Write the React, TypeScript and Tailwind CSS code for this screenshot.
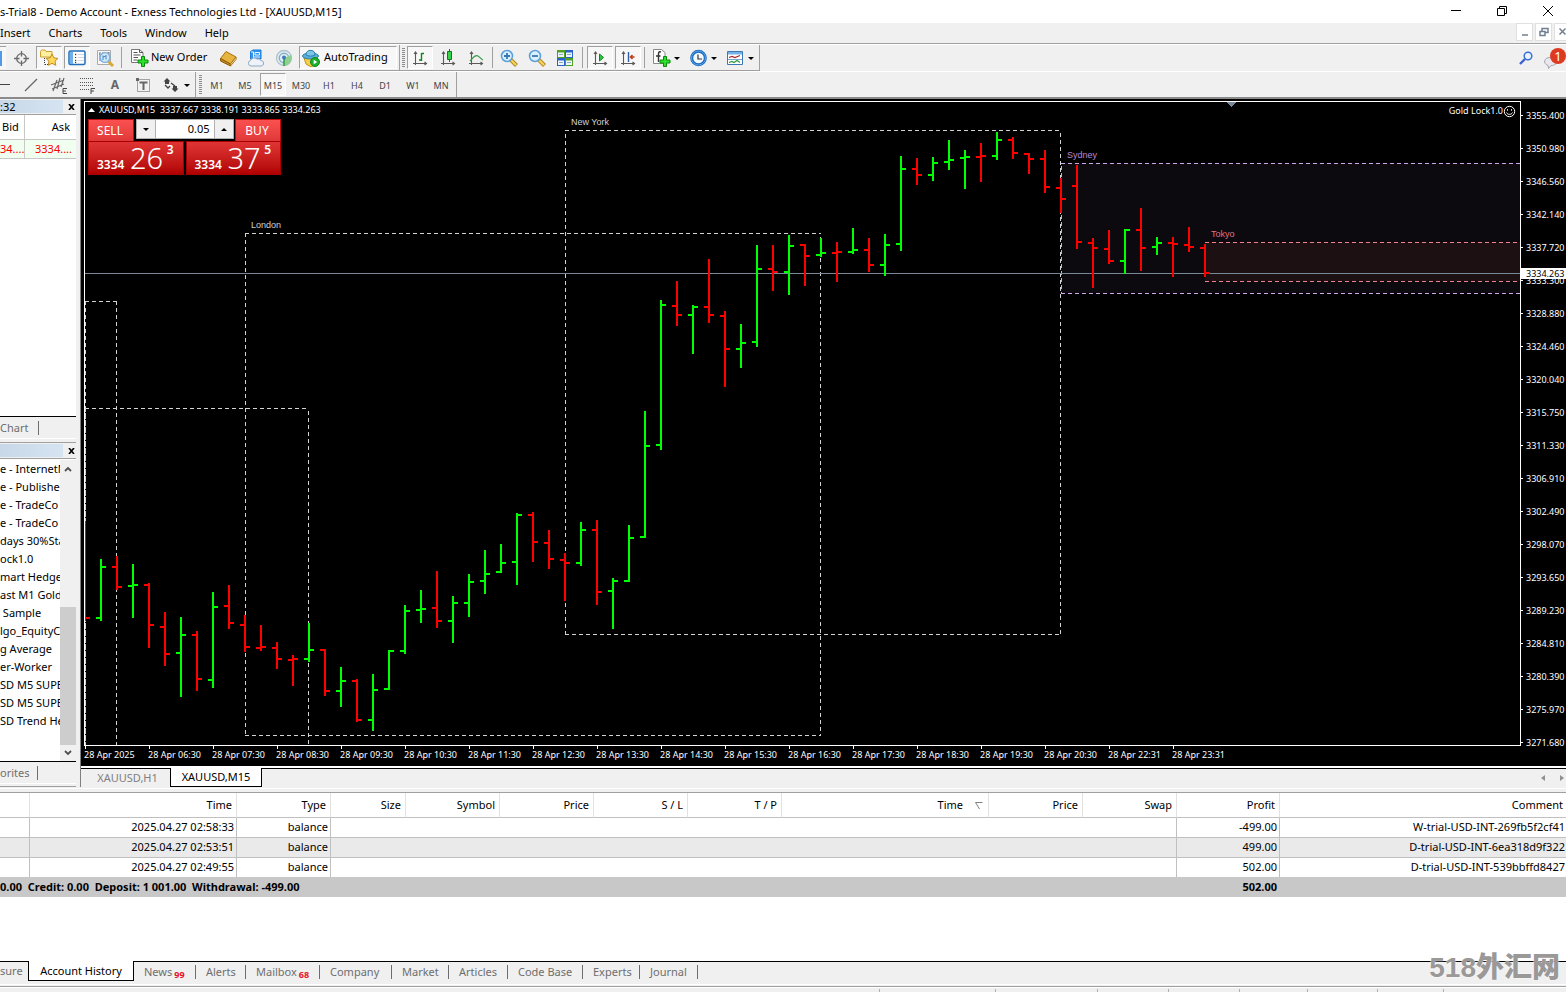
import React, { useState } from 'react';

type Bar = [high: number, low: number, open: number, close: number, up: 0 | 1];

const BARS: Bar[] = [
  [521, 621, 618, 618, 0], [559, 621, 618, 567, 1], [556, 590, 567, 587, 0], [564, 618, 586, 585, 1],
  [583, 648, 585, 625, 0], [612, 666, 627, 654, 0], [617, 697, 653, 635, 1], [631, 691, 635, 679, 0],
  [592, 688, 680, 607, 1], [585, 629, 606, 623, 0], [615, 652, 625, 647, 0], [625, 651, 648, 647, 0],
  [642, 669, 648, 659, 0], [655, 686, 660, 659, 0], [623, 662, 659, 650, 1], [649, 696, 650, 691, 0],
  [667, 707, 691, 681, 1], [679, 722, 681, 720, 0], [674, 731, 720, 690, 1], [650, 690, 689, 651, 1],
  [605, 654, 651, 611, 1], [590, 623, 610, 609, 1], [571, 628, 608, 621, 0], [596, 643, 621, 603, 1],
  [574, 617, 603, 582, 1], [550, 594, 581, 574, 1], [544, 573, 572, 563, 1], [513, 585, 562, 515, 1],
  [512, 562, 515, 542, 0], [530, 569, 543, 559, 0], [553, 601, 560, 563, 0], [522, 566, 563, 530, 1],
  [520, 605, 530, 592, 0], [578, 629, 591, 581, 1], [525, 582, 581, 538, 1], [411, 538, 537, 446, 1],
  [300, 450, 445, 305, 1], [281, 326, 306, 315, 0], [305, 354, 315, 307, 1], [259, 323, 307, 315, 0],
  [311, 387, 316, 349, 0], [324, 368, 349, 343, 1], [245, 347, 342, 269, 1], [245, 291, 269, 272, 0],
  [235, 295, 272, 246, 1], [244, 286, 245, 256, 0], [238, 257, 255, 253, 1], [242, 282, 253, 252, 0],
  [228, 254, 252, 250, 1], [238, 272, 250, 265, 0], [234, 276, 265, 245, 1], [156, 251, 244, 169, 1],
  [158, 185, 169, 175, 0], [157, 181, 175, 163, 1], [140, 170, 162, 160, 1], [150, 189, 158, 157, 1],
  [143, 182, 157, 156, 0], [132, 160, 156, 140, 1], [137, 159, 140, 153, 0], [153, 174, 154, 159, 0],
  [150, 193, 159, 187, 0], [178, 213, 188, 199, 0], [165, 249, 186, 242, 0], [238, 288, 243, 248, 0],
  [230, 264, 249, 261, 0], [229, 274, 261, 230, 1], [208, 271, 230, 248, 0], [237, 255, 247, 243, 1],
  [237, 277, 243, 244, 0], [227, 252, 245, 247, 0], [244, 277, 248, 273, 0],
];

const PRICES = [
  '3355.400', '3350.980', '3346.560', '3342.140', '3337.720', '3333.300', '3328.880', '3324.460', '3320.040', '3315.750',
  '3311.330', '3306.910', '3302.490', '3298.070', '3293.650', '3289.230', '3284.810', '3280.390', '3275.970', '3271.680',
];

const TIMES = [
  '2025', '06:30', '07:30', '08:30', '09:30', '10:30', '11:30', '12:30', '13:30',
  '14:30', '15:30', '16:30', '17:30', '18:30', '19:30', '20:30', '22:31', '23:31',
];

const NAV_ITEMS = [
  'e - InternetM', 'e - Publishe', 'e - TradeCo', 'e - TradeCo', 'days 30%Sta', 'ock1.0', 'mart Hedge',
  'ast M1 Gold', '\u00a0Sample', 'lgo_EquityC', 'g Average', 'er-Worker', 'SD M5 SUPE', 'SD M5 SUPE', 'SD Trend He',
];

const TIMEFRAMES = ['M1', 'M5', 'M15', 'M30', 'H1', 'H4', 'D1', 'W1', 'MN'];

const BOTTOM_TABS: { label: string; count?: string; width: string }[] = [
  { label: 'News', count: '99', width: 'w-[62px]' },
  { label: 'Alerts', width: 'w-[50px]' },
  { label: 'Mailbox', count: '68', width: 'w-[74px]' },
  { label: 'Company', width: 'w-[72px]' },
  { label: 'Market', width: 'w-[57px]' },
  { label: 'Articles', width: 'w-[59px]' },
  { label: 'Code Base', width: 'w-[75px]' },
  { label: 'Experts', width: 'w-[57px]' },
  { label: 'Journal', width: 'w-[58px]' },
];

const HISTORY = [
  { time: '2025.04.27 02:58:33', profit: '-499.00', comment: 'W-trial-USD-INT-269fb5f2cf41' },
  { time: '2025.04.27 02:53:51', profit: '499.00', comment: 'D-trial-USD-INT-6ea318d9f322' },
  { time: '2025.04.27 02:49:55', profit: '502.00', comment: 'D-trial-USD-INT-539bbffd8427' },
];

const Icon: React.FC<{ children: React.ReactNode }> = ({ children }) => (
  <svg viewBox="0 0 18 18" className="w-[18px] h-[18px] shrink-0" fill="none">{children}</svg>
);

const Caret = () => (
  <svg viewBox="0 0 6 3" className="w-[6px] h-[3px] shrink-0"><path d="M0 0h6L3 3z" fill="#000" /></svg>
);

const ToolButton: React.FC<{ label: string; pressed?: boolean; children: React.ReactNode }> = ({ label, pressed, children }) => (
  <button
    aria-label={label}
    className={`w-[26px] h-[23px] shrink-0 flex items-center justify-center pt-px ${
      pressed ? 'bg-[#f7f7f7] border border-t-[#a0a0a0] border-l-[#a0a0a0] border-b-white border-r-white' : ''
    }`}
  >
    {children}
  </button>
);

const MenuButton: React.FC<{ label: string; children: React.ReactNode }> = ({ label, children }) => (
  <button aria-label={label} className="w-[35px] h-[23px] shrink-0 flex items-center gap-[3px] pl-[5px] pt-px">
    {children}
    <Caret />
  </button>
);

const Separator = () => <div className="w-px h-[21px] mx-px bg-[#a0a0a0] shrink-0" />;

const Grip = () => (
  <svg viewBox="0 0 3 20" className="w-[3px] h-5 shrink-0" shapeRendering="crispEdges">
    <path d="M1.5 0v20" stroke="#8c8c8c" strokeWidth="3" strokeDasharray="1 1" />
  </svg>
);

const Axes = () => (
  <path d="M4.5 3v13M2 14.5h13M3 5l1.500-2L6 5M13.500 13l2 1.500-2 1.500" stroke="#5a5a5a" strokeWidth="1.100" />
);

const Plus = () => (
  <path d="M10.500 7.500h3v3.500h3.500v3h-3.500v3.500h-3V14H7v-3h3.500z" fill="#2ee02e" stroke="#078a07" />
);

const ZoomIcon: React.FC<{ plus?: boolean }> = ({ plus }) => (
  <Icon>
    <path d="M11 11l5.500 5.500" stroke="#b08a20" strokeWidth="4" />
    <path d="M11 11l5 5" stroke="#f7d860" strokeWidth="2" />
    <circle cx="7" cy="7" r="5.500" fill="#d8f0ff" stroke="#5a9fd8" strokeWidth="1.500" />
    <path d={plus ? 'M4 7h6M7 4v6' : 'M4 7h6'} stroke="#3a78b0" strokeWidth="1.800" />
  </Icon>
);

const MainToolbar = () => (
  <div className="flex items-center h-[27px] border-b border-white bg-[#f0f0f0] text-[11px]">
    <div className="flex items-center gap-[2px] h-[26px] pr-[2px] border-b border-r border-[#a0a0a0]">
      <button aria-label="Market Watch" className="w-[6px] h-[23px] bg-[#f7f7f7] border-t border-[#a0a0a0] flex items-center shrink-0">
        <span className="w-[2px] h-[15px] bg-[#4f9be8]" />
      </button>
      <ToolButton label="Data Window">
        <Icon>
          <circle cx="9.500" cy="9.500" r="4.800" stroke="#6a6a6a" strokeWidth="1.300" />
          <path d="M9.500 2v5.500M9.500 11.500V17M2 9.500h5.500M11.500 9.500H17" stroke="#6a6a6a" strokeWidth="1.300" />
        </Icon>
      </ToolButton>
      <ToolButton label="Navigator" pressed>
        <Icon>
          <path d="M.5 2.500l1-1.500h3.500l1 1.500h6V8H.500z" fill="#fff0a0" stroke="#cfa030" />
          <path d="M4.500 9v6.500M5 15.500h3" stroke="#333" strokeDasharray="1 1" />
          <path d="M12 5l1.900 3.900 4 .5-2.900 2.800.8 4.100L12 14.300l-3.800 2 .8-4.100-2.900-2.800 4-.5z" fill="#ffd95a" stroke="#c08a20" />
        </Icon>
      </ToolButton>
      <ToolButton label="Terminal" pressed>
        <Icon>
          <rect x="1" y="2" width="16" height="13.500" rx="1.500" fill="#fff" stroke="#2170b8" strokeWidth="1.500" />
          <path d="M2 3h3v12H2z" fill="#6fb0ea" />
          <path d="M7 5.500h1.200M7 11.500h1.200" stroke="#d00" strokeWidth="1.500" />
          <path d="M7 8.500h1.200M7 13.500h1.200" stroke="#333" />
          <path d="M9.500 5.500H16M9.500 8.500H16M9.500 11.500H16" stroke="#d0d8e4" />
        </Icon>
      </ToolButton>
      <ToolButton label="Strategy Tester">
        <Icon>
          <path d="M1.500 1.500h13v14h-13z" fill="#f8f8f8" stroke="#aaa" />
          <path d="M4 3v9M7 3v4M12 3v5M3 5h1M12 4h2" stroke="#777" />
          <path d="M12.500 12.500l4.500 4.500" stroke="#d8a830" strokeWidth="3" />
          <circle cx="9" cy="8.500" r="4.900" fill="#cfe8fb" stroke="#7aaede" strokeWidth="1.400" />
          <path d="M7 11V6.500M10 6v4.500M7 8l3-1" stroke="#4c86bb" />
        </Icon>
      </ToolButton>
      <Separator />
      <button className="w-[88px] h-[23px] flex items-center gap-[2px] pl-[6px] whitespace-nowrap">
        <Icon>
          <path d="M.5.500h8l3.500 3v10H.500z" fill="#fff" stroke="#777" />
          <path d="M8.500.500v3H12M2.500 3.500h4M2.500 6h7M2.500 8.500h4.500M2.500 11h4" stroke="#555" />
          <Plus />
        </Icon>
        New Order
      </button>
      <ToolButton label="MetaEditor">
        <Icon>
          <path d="M1.500 9.500L7 2.500l10 5.500-5.500 7z" fill="#e8b440" stroke="#a8720c" />
          <path d="M1.500 9.500v2.500L11.500 17v-2z" fill="#c78b1c" stroke="#8a5c0a" />
          <path d="M11.500 15v2l5.500-6.500V8z" fill="#fff1c4" stroke="#a8720c" />
        </Icon>
      </ToolButton>
      <ToolButton label="VPS">
        <Icon>
          <path d="M3.500 2.500L6 1h8v9H3.500z" fill="#2f95f0" stroke="#1c7fd8" />
          <path d="M4 3h2.500v6M8 3.500h4.500v2.500H8zM6.500 8H13" stroke="#e8f5ff" />
          <path d="M4 17a2.800 2.800 0 01-.5-5.500 4 4 0 016.500-1.500 3.500 3.500 0 014 1.500A2.800 2.800 0 0114.500 17z" fill="#eef3fa" stroke="#8fa6c4" />
        </Icon>
      </ToolButton>
      <ToolButton label="Signals">
        <Icon>
          <circle cx="9" cy="9" r="7.500" fill="#e6eef0" stroke="#b0c4cc" strokeWidth="1.300" />
          <circle cx="9" cy="9" r="4.700" stroke="#7fb0cd" strokeWidth="1.400" />
          <path d="M9 9l7-3a8 8 0 01-7 11z" fill="#8fcf8f" />
          <path d="M9 9v8" stroke="#2f9e3f" strokeWidth="1.500" />
          <circle cx="9" cy="8.500" r="2" fill="#3f77c8" />
        </Icon>
      </ToolButton>
      <button className="w-[98px] h-[23px] flex items-center gap-1 pl-[2px] whitespace-nowrap bg-[#f7f7f7] border border-t-[#a0a0a0] border-l-[#a0a0a0] border-b-white border-r-white">
        <Icon>
          <path d="M2 9h13l-1 6-5 3-5-3z" fill="#f5cf4c" stroke="#c0920f" />
          <ellipse cx="8.500" cy="7" rx="8" ry="3" fill="#5ab0dc" stroke="#2a7dab" />
          <path d="M4 6c0-3 2-5 5-4.500 3 0 4 2 4 4.500-2 1.500-7 1.500-9 0z" fill="#7cc6ea" stroke="#2a7dab" />
          <circle cx="13" cy="13" r="4.500" fill="#1faf2d" stroke="#0d8a1a" />
          <path d="M11.700 10.700v4.600l3.500-2.300z" fill="#fff" />
        </Icon>
        AutoTrading
      </button>
    </div>
    <div className="flex items-center gap-[2px] h-[26px] pl-[2px] pr-[2px] border-b border-r border-[#a0a0a0]">
      <Grip />
      <ToolButton label="Bar Chart" pressed>
        <Icon><Axes /><path d="M10.500 4v8M10.500 4.500H13M8 11h2.500" stroke="#0a8a1a" strokeWidth="1.400" /></Icon>
      </ToolButton>
      <ToolButton label="Candlesticks">
        <Icon><Axes /><path d="M10.500 0v13" stroke="#0a7a1a" /><path d="M8.500 2.500h4v8h-4z" fill="#35d24a" stroke="#0a7a1a" /></Icon>
      </ToolButton>
      <ToolButton label="Line Chart">
        <Icon><Axes /><path d="M3 12C6 9 8 5 11 7s3 3 5 4" stroke="#3a9a48" strokeWidth="1.300" /></Icon>
      </ToolButton>
      <Separator />
      <ToolButton label="Zoom In"><ZoomIcon plus /></ToolButton>
      <ToolButton label="Zoom Out"><ZoomIcon /></ToolButton>
      <ToolButton label="Tile Windows">
        <Icon>
          <path d="M1 1h8v8H1zM9 9h8v8H9z" fill="#4da321" />
          <path d="M9 1h8v8H9zM1 9h8v8H1z" fill="#2a62c9" />
          <path d="M2 3.500h6V8H2zM10 3.500h6V8h-6zM2 11.500h6V16H2zM10 11.500h6V16h-6z" fill="#eef5ff" />
          <path d="M3 5.500h4M11 5.500h4M3 13.500h4M11 13.500h4" stroke="#8ab" />
        </Icon>
      </ToolButton>
      <div className="w-px h-[21px] mx-[2px] bg-[#a0a0a0] shrink-0" />
      <ToolButton label="Auto Scroll" pressed>
        <Icon><Axes /><path d="M8.500 5v7l4-3.500z" fill="#2fc844" stroke="#0a8a1a" /></Icon>
      </ToolButton>
      <ToolButton label="Chart Shift" pressed>
        <Icon><Axes /><path d="M9.500 3v10" stroke="#2b5fa8" strokeWidth="1.400" /><path d="M15.500 8h-4M13.500 6l-2 2 2 2" stroke="#c03a10" strokeWidth="1.500" /></Icon>
      </ToolButton>
      <Separator />
      <MenuButton label="Indicators">
        <Icon>
          <path d="M.5.500h8l3.500 3v11H.500z" fill="#fff" stroke="#888" />
          <path d="M8 3C5.500 2 5.500 4 5.500 6v7M3 7h4.500" stroke="#333" strokeWidth="1.400" />
          <Plus />
        </Icon>
      </MenuButton>
      <MenuButton label="Periods">
        <Icon>
          <circle cx="8.500" cy="9" r="6.800" fill="#f2f8ff" stroke="#1c68bd" strokeWidth="3" />
          <circle cx="8.500" cy="9" r="7" stroke="#58a7ec" />
          <path d="M8 5.500V10h4" stroke="#333" strokeWidth="1.200" />
        </Icon>
      </MenuButton>
      <MenuButton label="Templates">
        <Icon>
          <path d="M.5 2.500h15v13H.500z" fill="#fff" stroke="#3d78b5" />
          <path d="M1 3h14v2.500H1z" fill="#74b2ea" />
          <path d="M1 10.500h14" stroke="#7aa7d4" />
          <path d="M2 8.500l3-1 3 1 5-2" stroke="#a02a2a" strokeWidth="1.200" />
          <path d="M2 13.500l3-1 2 1 3-2 3 2" stroke="#2a9a3a" strokeWidth="1.200" />
        </Icon>
      </MenuButton>
    </div>
    <div className="flex-1" />
    <button aria-label="Search" className="w-5 h-[23px] flex items-center justify-center">
      <svg viewBox="0 0 14 14" className="w-[14px] h-[14px]" fill="none">
        <circle cx="9" cy="5" r="3.800" fill="#eaf3ff" stroke="#3a6fd8" strokeWidth="1.500" />
        <path d="M6 8l-5 5" stroke="#3a62d0" strokeWidth="2.400" />
      </svg>
    </button>
    <button aria-label="Notifications" className="relative w-[26px] ml-1 h-[23px]">
      <svg viewBox="0 0 26 23" className="w-[26px] h-[23px]" fill="none">
        <path d="M10 10.500c-6 0-7.500 6-2 8l.5 3 2.500-3c4 0 6-2 6-4z" fill="#e8e8ee" stroke="#a4a4b0" />
        <circle cx="18" cy="9" r="8" fill="#dd3a22" />
      </svg>
      <span className="absolute left-[10px] top-px w-4 text-center leading-4 text-[13px] text-white">1</span>
    </button>
  </div>
);

const DrawingToolbar = () => {
  const [frame, setFrame] = useState('M15');
  return (
    <div className="flex items-center h-[27px] border-b-2 border-[#8a8a8a] bg-[#f0f0f0] text-[9px] text-[#444]">
      <div className="flex items-center gap-[2px] h-full pr-[2px] border-r border-[#a0a0a0]">
        <button aria-label="Horizontal Line" className="w-4 h-[23px] flex items-center"><span className="w-[10px] h-px bg-[#444]" /></button>
        <ToolButton label="Trendline"><Icon><path d="M3 15L15 3" stroke="#666" strokeWidth="1.300" /></Icon></ToolButton>
        <ToolButton label="Equidistant Channel">
          <Icon>
            <path d="M1 9L14 4M2 13l12-5M3 15l4-11M7 13l3-11M11 11l3-9" stroke="#666" strokeWidth="1.200" />
            <path d="M17 12.500h-4v5h4M13 15h3" stroke="#444" />
          </Icon>
        </ToolButton>
        <ToolButton label="Fibonacci Retracement">
          <Icon>
            <path d="M2 2.500h14M2 6.500h14M2 9.500h14M2 13.500h9" stroke="#555" strokeDasharray="1 1" />
            <path d="M13 18v-5.500h4M13 15h3" stroke="#444" />
          </Icon>
        </ToolButton>
        <ToolButton label="Text"><span className="text-[12px] font-bold text-[#666]">A</span></ToolButton>
        <ToolButton label="Text Label">
          <Icon>
            <path d="M3.500 3.500h12v12h-12z" stroke="#555" strokeDasharray="1 1" />
            <path d="M2 2h3v3H2z" fill="#666" />
            <path d="M5.500 6.500h8M9.500 6v8" stroke="#666" strokeWidth="2" />
          </Icon>
        </ToolButton>
        <MenuButton label="Arrows">
          <Icon>
            <path d="M4 2l3.500 3.500H6V8H2V5.500H.500zM10 10h4v2.500h1.500L12 16l-3.500-3.500H10z" fill="#444" />
            <path d="M2 9l3 3 2-2M8 7l4 3" stroke="#444" strokeWidth="1.300" />
          </Icon>
        </MenuButton>
      </div>
      <div className="flex items-center gap-[2px] h-full pl-[3px] pr-[2px] border-r border-[#a0a0a0]">
        <Grip />
        {TIMEFRAMES.map((tf) => (
          <button
            key={tf}
            onClick={() => setFrame(tf)}
            className={`w-[26px] h-[23px] shrink-0 text-center pt-[2px] ${
              frame === tf ? 'bg-[#f7f7f7] border border-t-[#a0a0a0] border-l-[#a0a0a0] border-b-white border-r-white' : ''
            }`}
          >
            {tf}
          </button>
        ))}
      </div>
    </div>
  );
};

const PanelTitle: React.FC<{ text?: string }> = ({ text }) => (
  <div className="flex items-center h-4 pb-px border-b border-[#a0a0a0]">
    <div className="w-[63px] shrink-0 h-[13px] leading-[13px] bg-gradient-to-r from-[#c8d8e8] to-[#d6e4f2]">{text}</div>
    <button aria-label="Close panel" className="flex-1 h-[13px] pl-[3px] pt-px flex items-center justify-center">
      <svg viewBox="0 0 7 6" className="w-[7px] h-[6px] shrink-0"><path d="M1 0l5 6M6 0L1 6" stroke="#000" strokeWidth="1.600" /></svg>
    </button>
  </div>
);

const SidePanels = () => (
  <aside className="w-[81px] shrink-0 flex flex-col border-r border-[#7f7f7f] bg-[#f0f0f0] pr-1 text-[11px]">
    <PanelTitle text=":32" />
    <div className="h-[302px] bg-white border-b border-black">
      <table className="w-full table-fixed border-separate border-spacing-0 leading-4">
        <colgroup><col className="w-[25px]" /><col /></colgroup>
        <thead>
          <tr className="h-[25px]">
            <th className="font-normal text-left pl-[2px] border-r border-b border-[#c8c8c8]">Bid</th>
            <th className="font-normal text-right pr-[6px] border-b border-[#c8c8c8]">Ask</th>
          </tr>
        </thead>
        <tbody>
          <tr className="h-[19px] bg-[#f0fff0] text-[#ff0000]">
            <td className="border-r border-b border-[#c8c8c8]">34....</td>
            <td className="text-right pr-1 border-b border-[#c8c8c8]">3334....</td>
          </tr>
        </tbody>
      </table>
    </div>
    <div className="flex items-center h-[21px] text-[#6e6e6e]">
      <button className="h-[14px] leading-[11px] w-[39px] text-left border-r border-[#6e6e6e]">Chart</button>
    </div>
    <div className="h-[5px] border-t border-white border-b border-b-[#a0a0a0]" />
    <PanelTitle />
    <div className="flex flex-1 min-h-0 bg-white border-b border-black pt-px">
      <ul className="flex-1 min-w-0 overflow-hidden whitespace-nowrap">
        {NAV_ITEMS.map((item, i) => (
          <li key={i} className="h-[18px] leading-[18px]">{item}</li>
        ))}
      </ul>
      <div className="w-4 shrink-0 flex flex-col items-center bg-[#f0f0f0]">
        <button aria-label="Scroll up" className="h-[18px] flex items-center">
          <svg viewBox="0 0 8 6" className="w-2 h-[6px]" fill="none"><path d="M1 5l3-3 3 3" stroke="#505050" strokeWidth="1.800" /></svg>
        </button>
        <div className="flex-1" />
        <div className="w-full h-[138px] bg-[#cdcdcd]" />
        <button aria-label="Scroll down" className="h-4 flex items-center">
          <svg viewBox="0 0 8 6" className="w-2 h-[6px]" fill="none"><path d="M1 1l3 3 3-3" stroke="#505050" strokeWidth="1.800" /></svg>
        </button>
      </div>
    </div>
    <div className="flex items-center h-[21px] text-[#6e6e6e]">
      <button className="h-[14px] leading-[11px] w-[38px] text-left border-r border-[#6e6e6e]">orites</button>
    </div>
    <div className="h-1 border-t border-white border-b border-b-[#a0a0a0]" />
  </aside>
);

const Quote: React.FC<{ pips: string; point: string }> = ({ pips, point }) => (
  <button className="relative flex-1 h-[34px] border border-[#a80000] bg-gradient-to-b from-[#e03434] to-[#b00000] text-white text-left">
    <span className="absolute left-2 bottom-px text-[12px] leading-4 font-semibold">3334</span>
    <span className="absolute left-[41px] top-0 text-[29px] leading-8 font-light">{pips}</span>
    <span className="absolute right-[9px] top-0 text-[12px] leading-4 font-semibold">{point}</span>
  </button>
);

const OneClickTrading = () => {
  const [lots, setLots] = useState('0.05');
  return (
    <div className="absolute left-[3px] top-[17px] w-[193px]">
      <div className="flex justify-between h-[22px] text-[12px] text-white">
        <button className="w-[46px] pr-[2px] bg-gradient-to-b from-[#fb5050] to-[#e03838] border border-b-0 border-[#b81010]">SELL</button>
        <div className="flex w-[98px] h-5 bg-white border border-[#b0b0b0]">
          <button aria-label="Decrease volume" className="w-[19px] flex items-center justify-center bg-[#f0f0f0] border-r border-[#b0b0b0]"><Caret /></button>
          <input
            aria-label="Volume"
            value={lots}
            onChange={(e) => setLots(e.target.value)}
            className="w-0 flex-1 pr-1 text-right text-[11px] text-black outline-none"
          />
          <button aria-label="Increase volume" className="w-[19px] flex items-center justify-center bg-[#f0f0f0] border-l border-[#b0b0b0]">
            <svg viewBox="0 0 6 3" className="w-[6px] h-[3px]"><path d="M0 3h6L3 0z" fill="#000" /></svg>
          </button>
        </div>
        <button className="w-[46px] pr-[2px] bg-gradient-to-b from-[#fb5050] to-[#e03838] border border-b-0 border-[#b81010]">BUY</button>
      </div>
      <div className="flex gap-[2px]">
        <Quote pips="26" point="3" />
        <Quote pips="37" point="5" />
      </div>
    </div>
  );
};

const PriceChart = () => (
  <svg className="absolute inset-0 w-full h-full" shapeRendering="crispEdges" fill="none">
    <g transform="translate(-85 -102)">
      <rect x="1061" y="163" width="4000" height="130" fill="#0c0a0f" />
      <rect x="1205" y="242" width="4000" height="39" fill="#1c1013" />
      <g stroke="#d3d3d3" strokeDasharray="4 3">
        <path d="M85.500 301v500M85 301.500h32M116.500 301v500" />
        <path d="M85.500 408v500M85 408.500h224M308.500 411v400" />
        <path d="M245.500 233v503M245 233.500h576M820.500 237v499M245 735.500h576" />
        <path d="M565.500 134v500M565 130.500h496M1060.500 133v501M565 634.500h496" />
      </g>
      <path d="M1061 163.500h4000M1061 293.500h4000M1061.500 166v127" stroke="#d0a8ec" strokeDasharray="4 3" />
      <path d="M1205 242.500h4000M1205 281.500h4000" stroke="#f08090" strokeDasharray="4 3" />
      <path d="M85 273.500h4000" stroke="#778899" />
      {BARS.map(([high, low, open, close, up], i) => {
        const x = 84 + i * 16;
        return (
          <g key={i} fill={up ? '#00ff00' : '#ff0000'}>
            <rect x={x} y={high} width="2" height={low - high} />
            <rect x={x - 4} y={open - 1} width="4" height="2" />
            <rect x={x + 2} y={close - 1} width="4" height="2" />
          </g>
        );
      })}
      <path d="M1227 102h9l-4.500 5z" fill="#778899" />
      <g fontFamily="'Liberation Sans', sans-serif" fontSize="9">
        <text x="571" y="125" fill="#d3d3d3">New York</text>
        <text x="251" y="228" fill="#d3d3d3">London</text>
        <text x="1067" y="158" fill="#b58ad8">Sydney</text>
        <text x="1211" y="237" fill="#e07080">Tokyo</text>
      </g>
    </g>
  </svg>
);

const ChartWindow = () => (
  <section className="flex-1 min-w-0 flex flex-col">
    <div className="flex h-[667px] bg-black text-white text-[9px] pl-[3px]">
      <div className="flex-1 min-w-0 flex flex-col pt-[2px]">
        <div className="relative h-[645px] border border-white overflow-hidden">
          <PriceChart />
          <div className="absolute left-[3px] top-px h-[14px] flex items-center gap-1 whitespace-pre">
            <svg viewBox="0 0 7 4" className="w-[7px] h-1"><path d="M0 4h7L3.500 0z" fill="#fff" /></svg>
            XAUUSD,M15  3337.667 3338.191 3333.865 3334.263
          </div>
          <div className="absolute right-1 top-[2px] h-[14px] flex items-center">
            Gold Lock1.0
            <svg viewBox="0 0 13 13" className="w-[13px] h-[13px]" fill="none" stroke="#fff">
              <circle cx="6.500" cy="6.500" r="5.200" />
              <path d="M4.500 4.200v1.500M8.500 4.200v1.500M3.500 7.500c1 2.500 5 2.500 6 0" />
            </svg>
          </div>
          <OneClickTrading />
        </div>
        <div className="flex h-5 overflow-hidden">
          {TIMES.map((t) => (
            <div key={t} className="w-16 shrink-0 whitespace-nowrap">
              <div className="w-px h-[3px] ml-px bg-white" />
              <div className="leading-[11px]">28 Apr {t}</div>
            </div>
          ))}
        </div>
      </div>
      <div className="relative w-[45px] shrink-0">
        {PRICES.map((p) => (
          <div key={p} className="flex items-center gap-[3px] h-[33px]">
            <span className="w-[2px] h-px bg-white" />
            {p}
          </div>
        ))}
        <div className="absolute left-0 top-[169px] w-full h-[11px] leading-[11px] pl-[5px] bg-white text-black">3334.263</div>
      </div>
    </div>
    <div className="h-[2px] bg-white" />
    <div className="flex h-[19px] text-[11px] text-[#808080] bg-[#f0f0f0]">
      <button className="w-[89px] pl-1 border-t border-black">XAUUSD,H1</button>
      <button className="w-[92px] bg-white text-black border border-t-0 border-black">XAUUSD,M15</button>
      <div className="flex-1 border-t border-black flex items-center justify-end gap-[15px] pr-[2px]">
        <button aria-label="Previous tab"><svg viewBox="0 0 4 6" className="w-1 h-[6px]"><path d="M4 0v6L0 3z" fill="#909090" /></svg></button>
        <button aria-label="Next tab"><svg viewBox="0 0 4 6" className="w-1 h-[6px]"><path d="M0 0v6l4-3z" fill="#909090" /></svg></button>
      </div>
    </div>
  </section>
);

const HEADERS = ['', 'Time', 'Type', 'Size', 'Symbol', 'Price', 'S / L', 'T / P', 'Time', 'Price', 'Swap', 'Profit'];

const Terminal = () => (
  <section className="flex-1 min-h-0 flex flex-col bg-white text-[11px]">
    <table className="w-full table-fixed border-separate border-spacing-0 text-right whitespace-nowrap">
      <colgroup>
        <col className="w-[30px]" /><col className="w-[207px]" /><col className="w-[94px]" /><col className="w-[75px]" />
        <col className="w-[94px]" /><col className="w-[94px]" /><col className="w-[94px]" /><col className="w-[94px]" />
        <col className="w-[207px]" /><col className="w-[94px]" /><col className="w-[94px]" /><col className="w-[103px]" /><col />
      </colgroup>
      <thead>
        <tr className="h-[25px]">
          {HEADERS.map((h, i) => (
            <th key={i} className="font-normal pr-1 border-b border-b-[#c0c0c0] border-r border-r-[#e2e2e2]">
              {h}
              {i === 8 && (
                <svg viewBox="0 0 8 7" className="inline w-2 h-[7px] ml-3 mr-px" fill="none"><path d="M7.500.5H.500L4.500 7" stroke="#808080" /></svg>
              )}
            </th>
          ))}
          <th className="font-normal pr-[3px] border-b border-[#c0c0c0]">Comment</th>
        </tr>
      </thead>
      <tbody>
        {HISTORY.map((row, i) => (
          <tr
            key={row.time}
            className={`[&>td]:border-[#c0c0c0] ${i === 2 ? 'h-[19px]' : 'h-5 [&>td]:border-b'} ${i === 1 ? 'bg-[#eaeaea]' : ''}`}
          >
            <td className="border-r" />
            <td className="pr-[2px] border-r">{row.time}</td>
            <td className="pr-[2px] border-r">balance</td>
            <td colSpan={8} className="border-r" />
            <td className="pr-[2px] border-r">{row.profit}</td>
            <td className="pr-px">{row.comment}</td>
          </tr>
        ))}
        <tr className="h-5 bg-[#c8c8c8] font-bold">
          <td colSpan={11} className="text-left whitespace-pre">0.00  Credit: 0.00  Deposit: 1 001.00  Withdrawal: -499.00</td>
          <td className="pr-[3px]">502.00</td>
          <td />
        </tr>
      </tbody>
    </table>
    <div className="flex-1" />
    <div className="flex h-5 bg-[#f0f0f0] text-[#6e6e6e]">
      <button className="w-7 text-left border-t border-black">sure</button>
      <button className="w-[106px] bg-white text-black border border-t-0 border-black pt-px">Account History</button>
      <div className="flex-1 flex items-center border-t border-black">
        {BOTTOM_TABS.map((tab) => (
          <button key={tab.label} className={`${tab.width} h-[14px] leading-[12px] shrink-0 pl-[10px] text-left whitespace-nowrap border-r border-[#6e6e6e]`}>
            {tab.label}
            {tab.count && <sub className="ml-[2px] text-[9px] leading-none font-bold text-[#e81123]">{tab.count}</sub>}
          </button>
        ))}
      </div>
    </div>
    <div className="h-[6px] bg-[#f0f0f0] border-b border-[#a0a0a0] pt-[3px]"><div className="h-px bg-white" /></div>
  </section>
);

const StatusBar = () => (
  <footer className="h-[5px] flex justify-end bg-[#f0f0f0] border-t border-white pt-px">
    <div className="w-[116px] border-l border-[#b0b0b0]" />
    <div className="w-[102px] border-l border-[#b0b0b0]" />
    <div className="w-[71px] border-l border-[#b0b0b0]" />
    <div className="w-[71px] border-l border-[#b0b0b0]" />
    <div className="w-[68px] border-l border-[#b0b0b0]" />
    <div className="w-[70px] border-l border-[#b0b0b0]" />
    <div className="w-[66px] border-l border-[#b0b0b0]" />
    <div className="w-[123px] border-l border-[#b0b0b0]" />
  </footer>
);

const App: React.FC = () => {
  return (
    <div className="relative h-screen flex flex-col overflow-hidden bg-[#f0f0f0] text-black font-['Noto_Sans','Open_Sans',sans-serif]">
      <header className="flex items-center h-[23px] shrink-0 bg-white text-[11px]">
        <h1 className="flex-1 pt-[2px]">s-Trial8 - Demo Account - Exness Technologies Ltd - [XAUUSD,M15]</h1>
        <div className="flex h-5 text-black">
          {[
            { label: 'Minimize', d: 'M0 4.5h10' },
            { label: 'Restore', d: 'M.5 2.500h7v7h-7zM2.500 2.500v-2h7v7h-2' },
            { label: 'Close', d: 'M0 0l10 10M10 0L0 10' },
          ].map((b) => (
            <button key={b.label} aria-label={b.label} className="w-[46px] flex items-center justify-center pl-[10px] pb-[2px]">
              <svg viewBox="0 0 10 10" className="w-[10px] h-[10px] overflow-visible" fill="none" stroke="#000"><path d={b.d} /></svg>
            </button>
          ))}
        </div>
      </header>
      <nav className="flex items-center justify-between h-[22px] shrink-0 border-b border-white text-[11px]">
        <div className="flex items-center gap-[18px] flex-1 h-[21px] border-b border-[#a0a0a0]">
          {['Insert', 'Charts', 'Tools', 'Window', 'Help'].map((m) => (
            <button key={m}>{m}</button>
          ))}
        </div>
        <div className="flex gap-[2px] w-[50px] h-[21px] border-b border-[#a0a0a0] pb-[2px] overflow-hidden">
          {[
            { label: 'Minimize chart', d: 'M2 8h6' },
            { label: 'Restore chart', d: 'M1 4.500h5v4H1zM3 4V1.500h6v4H6.500' },
            { label: 'Close chart', d: 'M1.500 1.500l6 6M7.500 1.500l-6 6' },
          ].map((b) => (
            <button key={b.label} aria-label={b.label} className="w-[17px] shrink-0 flex items-center justify-center bg-white border border-[#e0e0e0]">
              <svg viewBox="0 0 10 10" className="w-[10px] h-[10px]" fill="none" stroke="#708090" strokeWidth="1.500"><path d={b.d} /></svg>
            </button>
          ))}
        </div>
      </nav>
      <MainToolbar />
      <DrawingToolbar />
      <main className="flex shrink-0">
        <SidePanels />
        <ChartWindow />
      </main>
      <div className="h-[6px] shrink-0 pt-px border-b border-[#a0a0a0]"><div className="h-px bg-white" /></div>
      <Terminal />
      <StatusBar />
      <div className="absolute right-[6px] bottom-[6px] text-[28px] leading-9 font-black text-[#9b9898] font-['Liberation_Sans','Noto_Sans_CJK_SC',sans-serif] [text-shadow:0_0_2px_white] pointer-events-none">518外汇网</div>
    </div>
  );
};

export default App;
